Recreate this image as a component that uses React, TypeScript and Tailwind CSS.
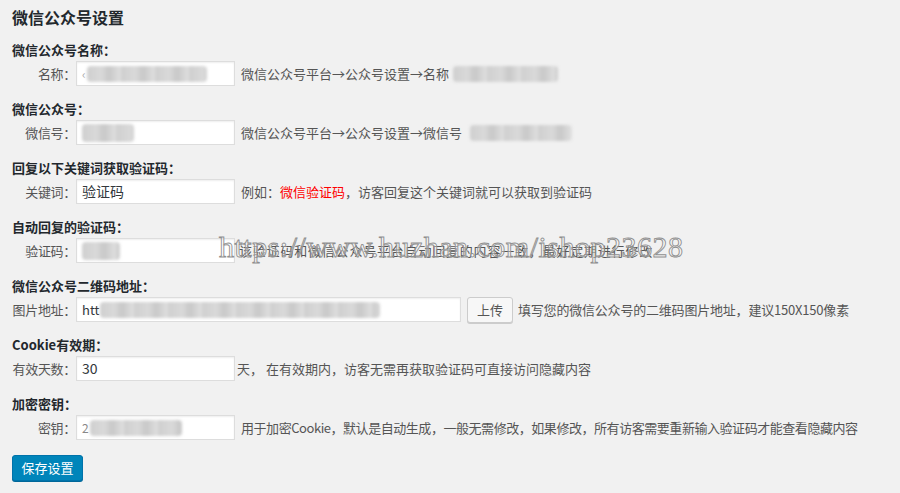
import React from 'react';

const font = "font-['Noto_Sans_CJK_SC','Noto_Sans',sans-serif]";

// a smudged patch standing in for the masked values in the screenshot
const Smudge: React.FC<{ className?: string }> = ({ className = '' }) => (
  <span
    className={`inline-block h-[16px] rounded-sm bg-[repeating-linear-gradient(90deg,#cfcfcf_0px,#d9d9d9_14px,#c8c8c8_22px,#e0e0e0_34px)] blur-[1.5px] ${className}`}
  />
);

const Field: React.FC<{ children?: React.ReactNode; wide?: boolean }> = ({ children, wide }) => (
  <div
    className={`flex shrink-0 items-center h-[25px] ${wide ? 'w-[385px]' : 'w-[159px]'} bg-white border border-[#dddddd] shadow-[inset_0_1px_2px_rgba(0,0,0,0.07)] px-[5px] text-[14px] text-[#32373c] overflow-hidden`}
  >
    {children}
  </div>
);

const Section: React.FC<{ title: string; label: string; children: React.ReactNode }> = ({ title, label, children }) => (
  <div className="mb-[14px]">
    <div className="h-[18px] leading-[18px] text-[13px] font-bold text-[#23282d]">{title}</div>
    <div className="mt-[2px] flex items-center h-[25px]">
      <div className="w-[64px] shrink-0 whitespace-nowrap text-right text-[13px] text-[#555] tracking-[-0.3px]">{label}</div>
      {children}
    </div>
  </div>
);

const Hint: React.FC<{ children: React.ReactNode; className?: string }> = ({ children, className = 'ml-[6px]' }) => (
  <span className={`text-[13px] text-[#555] whitespace-nowrap flex items-center ${className}`}>{children}</span>
);

export default function App() {
  return (
    <div className={`relative w-[900px] h-[493px] bg-[#f1f1f1] px-[12px] pt-[7px] overflow-hidden ${font}`}>
      <h1 className="h-[20px] leading-[20px] text-[16px] font-bold text-[#23282d] mb-[14px]">微信公众号设置</h1>

      <Section title="微信公众号名称：" label="名称：">
        <Field>
          <span className="text-[#aaa] text-[12px] mr-[1px]">‹</span>
          <Smudge className="w-[120px]" />
        </Field>
        <Hint>
          微信公众号平台→公众号设置→名称
          <Smudge className="ml-[4px] w-[105px]" />
        </Hint>
      </Section>

      <Section title="微信公众号：" label="微信号：">
        <Field>
          <Smudge className="w-[52px] h-[18px] rounded-full" />
        </Field>
        <Hint>
          微信公众号平台→公众号设置→微信号
          <Smudge className="ml-[8px] w-[102px]" />
        </Hint>
      </Section>

      <Section title="回复以下关键词获取验证码：" label="关键词：">
        <Field>验证码</Field>
        <Hint>
          例如：<span className="text-[#ff0000]">微信验证码</span>，访客回复这个关键词就可以获取到验证码
        </Hint>
      </Section>

      <Section title="自动回复的验证码：" label="验证码：">
        <Field>
          <Smudge className="w-[38px] h-[18px]" />
        </Field>
        <Hint className="ml-[4px] tracking-[0.8px]">该验证码和微信公众号平台自动回复的内容一致，最好定期进行修改</Hint>
      </Section>

      <Section title="微信公众号二维码地址：" label="图片地址：">
        <Field wide>
          <span className="text-[13px]">htt</span>
          <Smudge className="ml-[1px] w-[280px]" />
        </Field>
        <button className="ml-[6px] shrink-0 h-[26px] w-[46px] rounded-[3px] border border-[#cccccc] bg-[#f7f7f7] shadow-[0_1px_0_#cccccc] text-[13px] text-[#555]">
          上传
        </button>
        <Hint className="ml-[5px] tracking-[-0.2px]">填写您的微信公众号的二维码图片地址，建议150X150像素</Hint>
      </Section>

      <Section title="Cookie有效期：" label="有效天数：">
        <Field>30</Field>
        <Hint className="ml-[2px]">天， 在有效期内，访客无需再获取验证码可直接访问隐藏内容</Hint>
      </Section>

      <Section title="加密密钥：" label="密钥：">
        <Field>
          <span className="text-[12px] text-[#888] mr-[1px]">2</span>
          <Smudge className="w-[92px]" />
        </Field>
        <Hint className="ml-[6px] tracking-[-0.45px]">用于加密Cookie，默认是自动生成，一般无需修改，如果修改，所有访客需要重新输入验证码才能查看隐藏内容</Hint>
      </Section>

      <button className="h-[26px] w-[71px] rounded-[3px] border border-[#0073aa] bg-[#0085ba] shadow-[0_1px_0_#006799] text-[13px] text-white">
        保存设置
      </button>

      {/* site watermark over the page */}
      <div className="absolute left-[219px] top-[231px] text-[30px] leading-[32px] font-['Liberation_Serif',serif] tracking-[0.5px] text-[rgba(255,255,255,0.4)] [-webkit-text-stroke:0.9px_#8f8f8f] whitespace-nowrap pointer-events-none">
        https://www.huzhan.com/ishop23628
      </div>
    </div>
  );
}
